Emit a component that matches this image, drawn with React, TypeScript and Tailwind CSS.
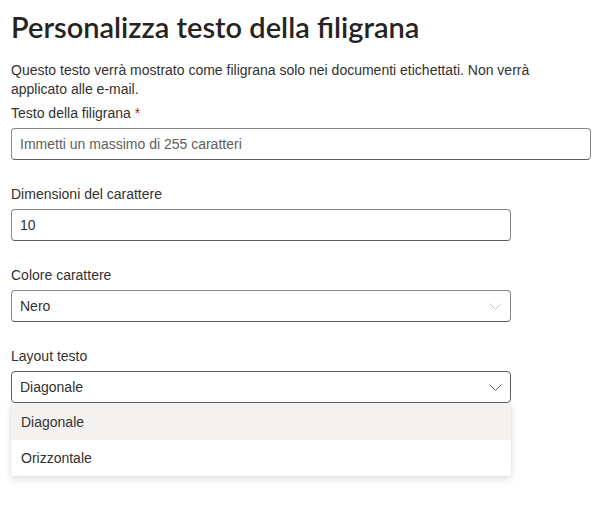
import { useState } from "react";

const FONT = "font-['Liberation_Sans',Arial,sans-serif]";

function Chevron({ light }: { light?: boolean }) {
  return (
    <svg width="13" height="7" viewBox="0 0 13 7" fill="none" className={light ? "text-[#c8c6c4]" : "text-[#605e5c]"}>
      <path d="M0.5 0.5L6.5 6.5L12.5 0.5" stroke="currentColor" strokeWidth="1" />
    </svg>
  );
}

function Label({ children, required }: { children: string; required?: boolean }) {
  return (
    <div className="text-[14px] leading-[20px] text-[#323130] mb-[5px]">
      {children}
      {required && <span className="text-[#a4262c] ml-1">*</span>}
    </div>
  );
}

export default function App() {
  const [testo, setTesto] = useState("");
  const [dimensione, setDimensione] = useState("10");
  const layouts = ["Diagonale", "Orizzontale"];

  return (
    <div className={`${FONT} bg-white w-[603px] h-[506px] px-[11px] pt-[7px] text-[#323130]`}>
      <h1 className="font-['Lato',sans-serif] text-[29px] leading-[40px] font-semibold text-[#252423]">
        Personalizza testo della filigrana
      </h1>

      <p className="mt-[14px] text-[14px] leading-[19px] w-[560px]">
        Questo testo verrà mostrato come filigrana solo nei documenti etichettati. Non verrà applicato alle e-mail.
      </p>

      <div className="mt-[4px]">
        <Label required>Testo della filigrana</Label>
        <input
          value={testo}
          onChange={e => setTesto(e.target.value)}
          placeholder="Immetti un massimo di 255 caratteri"
          className="w-[580px] h-[32px] px-[8px] rounded-[4px] border border-[#8a8886] border-b-[#605e5c] text-[14px] outline-none placeholder:text-[#605e5c]"
        />
      </div>

      <div className="mt-[24px]">
        <Label>Dimensioni del carattere</Label>
        <input
          value={dimensione}
          onChange={e => setDimensione(e.target.value)}
          className="w-[500px] h-[32px] px-[8px] rounded-[4px] border border-[#8a8886] border-b-[#605e5c] text-[14px] outline-none"
        />
      </div>

      <div className="mt-[24px]">
        <Label>Colore carattere</Label>
        <div className="w-[500px] h-[32px] px-[8px] rounded-[4px] border border-[#8a8886] border-b-[#605e5c] text-[14px] flex items-center justify-between">
          <span>Nero</span>
          <Chevron light />
        </div>
      </div>

      <div className="mt-[24px] relative">
        <Label>Layout testo</Label>
        <div className="w-[500px] h-[32px] px-[8px] rounded-[4px] border border-[#605e5c] text-[14px] flex items-center justify-between">
          <span>Diagonale</span>
          <Chevron />
        </div>

        {/* menu aperto sotto il select */}
        <div className="absolute left-0 top-[58px] w-[500px] bg-white rounded-[2px] shadow-[0_3px_8px_rgba(0,0,0,0.13),0_0_2px_rgba(0,0,0,0.11)]">
          {layouts.map((l, i) => (
            <div
              key={l}
              className={`h-[36px] px-[10px] flex items-center text-[14px] ${i === 0 ? "bg-[#f3f2f1]" : ""}`}
            >
              {l}
            </div>
          ))}
        </div>
      </div>
    </div>
  );
}
